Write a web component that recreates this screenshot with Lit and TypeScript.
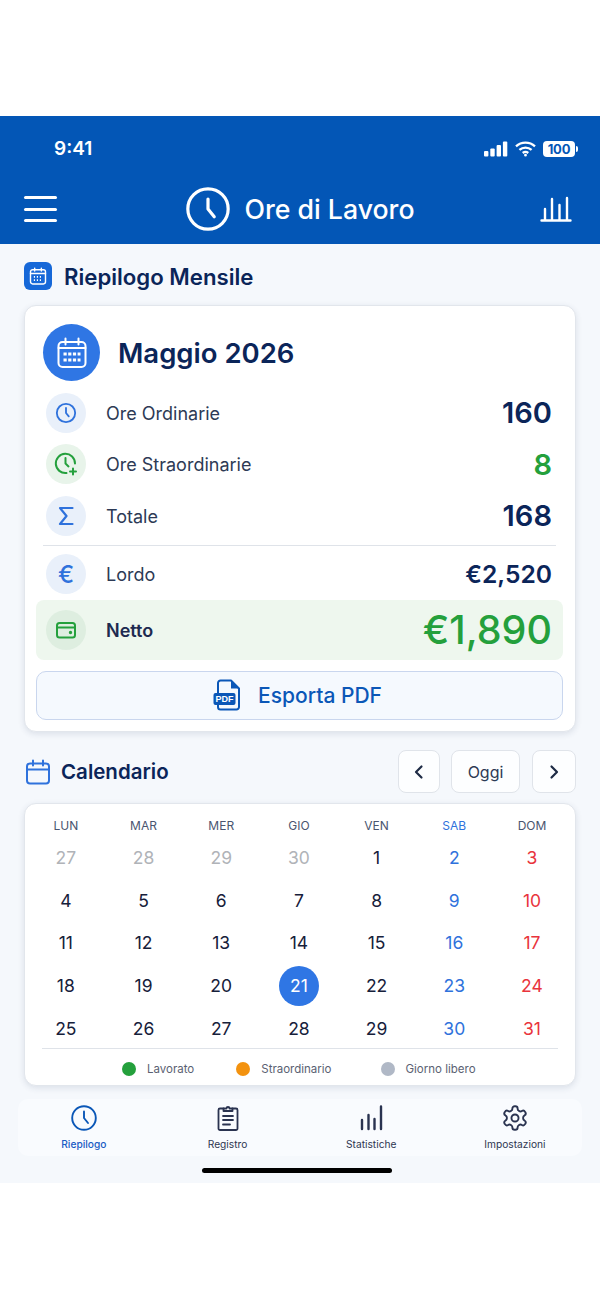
import { LitElement, html, css, svg } from "lit";
import { customElement } from "lit/decorators.js";

const WEEKDAYS = ["LUN", "MAR", "MER", "GIO", "VEN", "SAB", "DOM"];
// first four cells belong to the previous month
const DAYS = [27, 28, 29, 30, ...Array.from({ length: 31 }, (_, i) => i + 1)];

const clockHands = svg`<path d="M12 6.6V12l3.4 4.2" />`;

const dayClass = (index: number, day: number) => {
    if (index < 4) return "day muted";
    if (day === 21) return "day today";
    if (index % 7 === 5) return "day sat";
    if (index % 7 === 6) return "day sun";
    return "day";
};

@customElement("app-root")
export class AppRoot extends LitElement {
    private _row(icon: unknown, label: string, value: string, tone = "") {
        return html`
            <div class="row ${tone}">
                <span class="badge ${tone}">${icon}</span>
                <span class="label">${label}</span>
                <span class="value">${value}</span>
            </div>
        `;
    }

    private _navItem(icon: unknown, label: string, active = false) {
        return html`
            <div class="nav-item ${active ? "active" : ""}">
                ${icon}
                <span>${label}</span>
            </div>
        `;
    }

    render() {
        return html`
            <div class="top-gap"></div>
            <header>
                <div class="status">
                    <span class="time">9:41</span>
                    <div class="status-icons">
                        <svg width="24" height="16" viewBox="0 0 24 16" fill="#fff">
                            <rect x="0" y="10" width="4.4" height="5.6" rx="1" />
                            <rect x="6.3" y="7.4" width="4.4" height="8.2" rx="1" />
                            <rect x="12.6" y="4" width="4.4" height="11.6" rx="1" />
                            <rect x="18.9" y="0.4" width="4.4" height="15.2" rx="1" />
                        </svg>
                        <svg width="21" height="16" viewBox="0 0 21 16" fill="none" stroke="#fff" stroke-width="2.3">
                            <path d="M1 5.4c5.4-5 13.6-5 19 0" />
                            <path d="M4.4 8.9c3.5-3.1 8.7-3.1 12.2 0" />
                            <path d="M7.7 12c1.7-1.3 3.9-1.3 5.6 0" />
                            <circle cx="10.5" cy="14.2" r="0.7" fill="#fff" stroke-width="1.4" />
                        </svg>
                        <span class="battery"><b>100</b></span>
                    </div>
                </div>
                <div class="toolbar">
                    <div class="burger"><i></i><i></i><i></i></div>
                    <div class="brand">
                        <svg width="44" height="44" viewBox="0 0 24 24" fill="none" stroke="#fff" stroke-width="1.75" stroke-linecap="round" stroke-linejoin="round">
                            <circle cx="12" cy="12" r="11" />
                            ${clockHands}
                        </svg>
                        <h1>Ore di Lavoro</h1>
                    </div>
                    <svg class="chart" width="32" height="26" viewBox="0 0 32 26" fill="none" stroke="#fff" stroke-width="2.4" stroke-linecap="round">
                        <path d="M1.500 24.500h29M5 24v-11M12 24V3M19.500 24V9M27 24V2" />
                    </svg>
                </div>
            </header>

            <main>
                <div class="section-title">
                    <span class="square-icon">
                        <svg width="20" height="20" viewBox="0 0 24 24" fill="none" stroke="#fff" stroke-width="1.7" stroke-linecap="round">
                            <rect x="3" y="4.5" width="18" height="17" rx="2.5" />
                            <path d="M3 9h18M8 2.5v3.5M16 2.5v3.5" />
                            <path d="M7 13h10M7 17h10" stroke-dasharray="1.4 2.2" stroke-linecap="butt" stroke-width="2" />
                        </svg>
                    </span>
                    <h2>Riepilogo Mensile</h2>
                </div>

                <section class="card summary">
                    <div class="month">
                        <span class="month-icon">
                            <svg width="32" height="32" viewBox="0 0 32 32" fill="none" stroke="#fff" stroke-width="2" stroke-linecap="round">
                                <rect x="2.5" y="5" width="27" height="25" rx="4" />
                                <path d="M2.5 11h27" />
                                <path d="M9.5 1.5v6M22.5 1.5v6" />
                                <path d="M7.5 17h17M7.5 23h17" stroke-width="3.2" stroke-linecap="butt" stroke-dasharray="3.2 1.5" />
                            </svg>
                        </span>
                        <h3>Maggio 2026</h3>
                    </div>

                    <div class="rows">
                        ${this._row(
                            html`<svg width="22" height="22" viewBox="0 0 24 24" fill="none" stroke="#2f72dc" stroke-width="2" stroke-linecap="round" stroke-linejoin="round"><circle cx="12" cy="12" r="10" /><path d="M12 6.5V12l3 3.6" /></svg>`,
                            "Ore Ordinarie",
                            "160",
                        )}
                        ${this._row(
                            html`<svg width="24" height="24" viewBox="0 0 24 24" fill="none" stroke="#24a03c" stroke-width="2" stroke-linecap="round" stroke-linejoin="round"><path d="M21 11.5A9.6 9.6 0 1 0 12.5 21" /><path d="M11.5 6v5.6l3 2.8" /><path d="M19 16.5v6M16 19.5h6" /></svg>`,
                            "Ore Straordinarie",
                            "8",
                            "green",
                        )}
                        ${this._row(
                            html`<svg width="20" height="22" viewBox="0 0 20 22" fill="none" stroke="#2f72dc" stroke-width="2.2" stroke-linecap="round" stroke-linejoin="round"><path d="M16.500 3H4l6.500 8L4 19h12.500" /></svg>`,
                            "Totale",
                            "168",
                        )}
                    </div>
                    <div class="divider"></div>
                    ${this._row(html`<span class="euro">€</span>`, "Lordo", "€2,520", "money")}
                    <div class="net">
                        <span class="badge net-badge">
                            <svg width="22" height="22" viewBox="0 0 22 22" fill="none" stroke="#24a03c" stroke-width="2" stroke-linejoin="round"><rect x="2" y="4" width="18" height="14.5" rx="2.5" /><path d="M2 8.5h18" /><circle cx="15.5" cy="13.5" r="0.7" fill="#24a03c" /></svg>
                        </span>
                        <span class="net-label">Netto</span>
                        <span class="net-value">€1,890</span>
                    </div>
                    <button class="export">
                        <svg width="28" height="32" viewBox="0 0 28 32" fill="none">
                            <path d="M5 14V4a2.5 2.5 0 0 1 2.5-2.5H18L26 9.5V28a2.5 2.5 0 0 1-2.5 2.5h-16A2.5 2.5 0 0 1 5 28v-2" stroke="#0b57b7" stroke-width="2" stroke-linejoin="round" />
                            <path d="M18 1.5V9.5H26Z" fill="#0b57b7" />
                            <rect x="0.5" y="14" width="22" height="12" rx="2" fill="#0b57b7" />
                            <text x="11.5" y="23.3" text-anchor="middle" class="pdf-tag">PDF</text>
                        </svg>
                        <span>Esporta PDF</span>
                    </button>
                </section>

                <div class="cal-head">
                    <svg width="26" height="26" viewBox="0 0 26 26" fill="none" stroke="#2f72dc" stroke-width="2" stroke-linecap="round">
                        <rect x="2" y="4.5" width="22" height="20" rx="3" />
                        <path d="M2 10.5h22M8 1.5v5M18 1.5v5" />
                    </svg>
                    <h2>Calendario</h2>
                    <div class="cal-buttons">
                        <button class="cal-btn prev">
                            <svg width="12" height="16" viewBox="0 0 12 16" fill="none" stroke="#1e2b45" stroke-width="2.2" stroke-linecap="round" stroke-linejoin="round"><path d="M8.5 2.5 3 8l5.5 5.5" /></svg>
                        </button>
                        <button class="cal-btn oggi">Oggi</button>
                        <button class="cal-btn next">
                            <svg width="12" height="16" viewBox="0 0 12 16" fill="none" stroke="#1e2b45" stroke-width="2.2" stroke-linecap="round" stroke-linejoin="round"><path d="M3.5 2.5 9 8l-5.5 5.5" /></svg>
                        </button>
                    </div>
                </div>

                <section class="card calendar">
                    <div class="weekdays">
                        ${WEEKDAYS.map(
                            (d) => html`<span class=${d === "SAB" ? "sat" : ""}>${d}</span>`,
                        )}
                    </div>
                    <div class="days">
                        ${DAYS.map(
                            (d, i) => html`<div class=${dayClass(i, d)}><span>${d}</span></div>`,
                        )}
                    </div>
                    <div class="divider cal-divider"></div>
                    <div class="legend">
                        <div class="key worked"><i></i>Lavorato</div>
                        <div class="key extra"><i></i>Straordinario</div>
                        <div class="key off"><i></i>Giorno libero</div>
                    </div>
                </section>

                <nav>
                    <div class="nav-grid">
                        ${this._navItem(
                            html`<svg width="26" height="26" viewBox="0 0 26 26" fill="none" stroke="#0b57b7" stroke-width="1.9" stroke-linecap="round" stroke-linejoin="round"><circle cx="13" cy="13" r="11.8" /><path d="M13 6.5V13l4 5" /></svg>`,
                            "Riepilogo",
                            true,
                        )}
                        ${this._navItem(
                            html`<svg width="26" height="26" viewBox="0 0 26 26" fill="none" stroke="#2a3350" stroke-width="1.8" stroke-linecap="round" stroke-linejoin="round"><path d="M8.5 3.5H5a1.5 1.5 0 0 0-1.5 1.5v18.500A1.500 1.500 0 0 0 5 25h16a1.500 1.500 0 0 0 1.500-1.500V5A1.500 1.500 0 0 0 21 3.500h-3.500" /><path d="M8.500 6V3.500h3a1.500 1.500 0 0 1 3 0h3V6Z" /><path d="M8 11h10M8 15h10M8 19.500h7" /></svg>`,
                            "Registro",
                        )}
                        ${this._navItem(
                            html`<svg width="26" height="26" viewBox="0 0 26 26" fill="none" stroke="#2a3350" stroke-width="2.4" stroke-linecap="round"><path d="M4 24v-9M10.500 24V10M16.500 24v-10M23 24V1.500" /></svg>`,
                            "Statistiche",
                        )}
                        ${this._navItem(
                            html`<svg width="26" height="26" viewBox="1 1 22 22" fill="none" stroke="#2a3350" stroke-width="1.600" stroke-linecap="round" stroke-linejoin="round"><path d="M12.220 2h-.44a2 2 0 0 0-2 2v.18a2 2 0 0 1-1 1.730l-.43.25a2 2 0 0 1-2 0l-.15-.08a2 2 0 0 0-2.730.73l-.22.38a2 2 0 0 0 .73 2.730l.15.1a2 2 0 0 1 1 1.720v.51a2 2 0 0 1-1 1.740l-.15.09a2 2 0 0 0-.73 2.730l.22.38a2 2 0 0 0 2.730.73l.15-.08a2 2 0 0 1 2 0l.43.25a2 2 0 0 1 1 1.730V20a2 2 0 0 0 2 2h.44a2 2 0 0 0 2-2v-.18a2 2 0 0 1 1-1.730l.43-.25a2 2 0 0 1 2 0l.15.08a2 2 0 0 0 2.730-.73l.22-.39a2 2 0 0 0-.73-2.730l-.15-.08a2 2 0 0 1-1-1.740v-.5a2 2 0 0 1 1-1.740l.15-.09a2 2 0 0 0 .73-2.730l-.22-.38a2 2 0 0 0-2.730-.73l-.15.08a2 2 0 0 1-2 0l-.43-.25a2 2 0 0 1-1-1.730V4a2 2 0 0 0-2-2z" /><circle cx="12" cy="12" r="3" /></svg>`,
                            "Impostazioni",
                        )}
                    </div>
                </nav>
                <div class="home-bar"></div>
            </main>
        `;
    }

    static styles = css`
        :host {
            display: block;
            height: 1299px;
            background: #fff;
            font-family: Inter, "Liberation Sans", sans-serif;
            color: #0b2559;
        }
        h1, h2, h3 { margin: 0; }
        button { font-family: inherit; padding: 0; cursor: pointer; }

        .top-gap { height: 116px; }

        header {
            height: 128px;
            background: #0356b6;
            color: #fff;
            box-sizing: border-box;
        }
        .status {
            height: 66px;
            padding: 19px 22px 0 54px;
            box-sizing: border-box;
            display: flex;
            align-items: flex-start;
            justify-content: space-between;
        }
        .time { font-size: 19px; font-weight: 600; line-height: 28px; }
        .status-icons { display: flex; align-items: center; gap: 7px; height: 28px; }
        .battery {
            position: relative;
            width: 32px;
            height: 16px;
            background: #fff;
            border-radius: 4px;
            display: flex;
            align-items: center;
            justify-content: center;
            margin-right: 3px;
        }
        .battery::after {
            content: "";
            position: absolute;
            right: -3px;
            top: 5px;
            width: 2px;
            height: 6px;
            background: #fff;
            border-radius: 0 2px 2px 0;
        }
        .battery b { color: #0356b6; font-size: 13px; font-weight: 700; letter-spacing: -0.2px; }

        .toolbar {
            height: 54px;
            padding: 0 28px 0 24px;
            display: flex;
            align-items: center;
            justify-content: space-between;
        }
        .burger { width: 33px; display: flex; flex-direction: column; gap: 8.500px; }
        .burger i { display: block; height: 3px; background: #fff; border-radius: 2px; }
        .brand { display: flex; align-items: center; gap: 14px; margin-left: 4px; }
        h1 { font-size: 26.700px; font-weight: 500; }
        .chart { display: block; }

        main {
            height: 939px;
            background: #f5f8fc;
            padding: 0 24px;
            box-sizing: border-box;
            display: flex;
            flex-direction: column;
        }

        .section-title { display: flex; align-items: center; gap: 12px; height: 61px; padding-top: 3px; box-sizing: border-box; flex: none; }
        .square-icon {
            width: 28px; height: 28px; border-radius: 6px; background: #1668d8;
            display: flex; align-items: center; justify-content: center;
        }
        h2 { font-size: 22.200px; font-weight: 600; color: #0b2559; }

        .card {
            background: #fff;
            border: 1px solid #e2e6ec;
            border-radius: 12px;
            box-shadow: 0 2px 6px rgba(30, 50, 90, 0.12);
            box-sizing: border-box;
        }
        .summary { height: 427px; flex: none; padding: 18px 12px 0 11px; display: flex; flex-direction: column; }
        .month { display: flex; align-items: center; gap: 18px; margin-left: 7px; height: 57px; flex: none; }
        .month-icon {
            width: 57px; height: 57px; border-radius: 50%; background: #2f76e4;
            display: flex; align-items: center; justify-content: center;
        }
        h3 { font-size: 27.500px; font-weight: 600; color: #0b2559; margin-top: 1px; }

        .rows { margin-top: 6px; flex: none; }
        .row {
            display: flex; align-items: center; height: 51.500px; flex: none;
            padding: 0 11px 0 10px; font-size: 18px;
        }
        .badge {
            width: 40px; height: 40px; border-radius: 50%; background: #e9f0fa; flex: none;
            display: flex; align-items: center; justify-content: center;
        }
        .badge.green { background: #e8f4ea; }
        .euro { font-size: 24px; font-weight: 500; color: #2f72dc; }
        .label { margin: 1px 0 0 20px; flex: 1; color: #2d3a55; font-size: 18px; }
        .value { font-size: 29px; font-weight: 600; color: #0b2559; }
        .row.green .value { color: #24a03c; }
        .row.money .value { font-size: 24.600px; }
        .divider { height: 1px; background: #dfe3e9; margin: 3px 7px 0 7px; flex: none; }
        .row.money { margin-top: 3px; height: 51px; }

        .net {
            height: 60px; background: #eef7ee; border-radius: 8px; flex: none;
            display: flex; align-items: center; padding: 0 11px 0 10px;
        }
        .net-badge { background: #deeee0; }
        .net-label { margin: 1px 0 0 20px; flex: 1; font-size: 18px; font-weight: 600; color: #1d2a50; }
        .net-value { font-size: 39.500px; font-weight: 500; color: #24a03c; margin-top: 1px; }

        .export {
            margin-top: 11px; height: 49px; flex: none; width: 527px;
            background: #f5f9fe; border: 1px solid #c9d6ee; border-radius: 10px;
            display: flex; align-items: center; justify-content: center; gap: 17px;
            padding-right: 4px;
            color: #0b57b7; font-size: 21px; font-weight: 500;
        }
        .pdf-tag { fill: #fff; font-size: 9px; font-weight: 700; font-family: "Liberation Sans", sans-serif; }

        .cal-head { display: flex; align-items: center; height: 43px; margin-top: 18px; flex: none; }
        .cal-head > svg { margin-left: 1px; }
        .cal-head h2 { margin-left: 10px; font-size: 20.500px; flex: 1; }
        .cal-buttons { display: flex; gap: 11px; }
        .cal-btn {
            height: 43px; background: #fdfeff; border: 1px solid #e0e4ea; border-radius: 8px;
            display: flex; align-items: center; justify-content: center;
            font-size: 16px; color: #2d3a55;
        }
        .prev { width: 42px; }
        .oggi { width: 69px; }
        .next { width: 44px; margin-left: 1px; }

        .calendar { margin-top: 10px; height: 283px; flex: none; padding: 0 5px 0 2px; }
        .weekdays, .days { display: grid; grid-template-columns: repeat(7, 77.700px); }
        .weekdays {
            height: 32px; padding-top: 14px; box-sizing: border-box;
            font-size: 12px; line-height: 16px; color: #4a5570; text-align: center;
        }
        .weekdays .sat { color: #2f72dc; }
        .days { grid-auto-rows: 42.800px; font-size: 17.500px; color: #16203a; }
        .day { display: flex; align-items: center; justify-content: center; }
        .day.muted { color: #b0b3b8; }
        .day.sat { color: #2f72dc; }
        .day.sun { color: #e9343c; }
        .day.today span {
            width: 40px; height: 40px; border-radius: 50%; background: #2f76e4; color: #fff;
            display: flex; align-items: center; justify-content: center;
        }
        .cal-divider { margin: -2px 12px 0 15px; }
        .legend { display: flex; height: 41px; align-items: center; font-size: 11.500px; color: #5a6172; padding-left: 95px; }
        .key { display: flex; align-items: center; gap: 11px; }
        .key i { width: 14px; height: 14px; border-radius: 50%; display: block; }
        .worked i { background: #24a03c; }
        .extra { margin-left: 42px; }
        .extra i { background: #f3920f; }
        .off { margin-left: 49px; }
        .off i { background: #b0b8c6; }

        nav {
            margin: 13px -6px 0; height: 57px; flex: none;
            background: #f9fbfe; border-radius: 10px;
        }
        .nav-grid { display: grid; grid-template-columns: repeat(4, 143.700px); margin: 0 -6px; }
        .nav-item {
            display: flex; flex-direction: column; align-items: center; height: 57px;
            font-size: 10.200px; color: #2d3550; padding-top: 6px; box-sizing: border-box; gap: 7px;
        }
        .nav-item svg { display: block; }
        .nav-item.active { color: #1a5cc4; font-weight: 500; }
        .home-bar { width: 190px; height: 5px; border-radius: 3px; background: #000; margin: 12px 0 0 178px; flex: none; }
    `;
}

declare global {
    interface HTMLElementTagNameMap {
        "app-root": AppRoot;
    }
}
